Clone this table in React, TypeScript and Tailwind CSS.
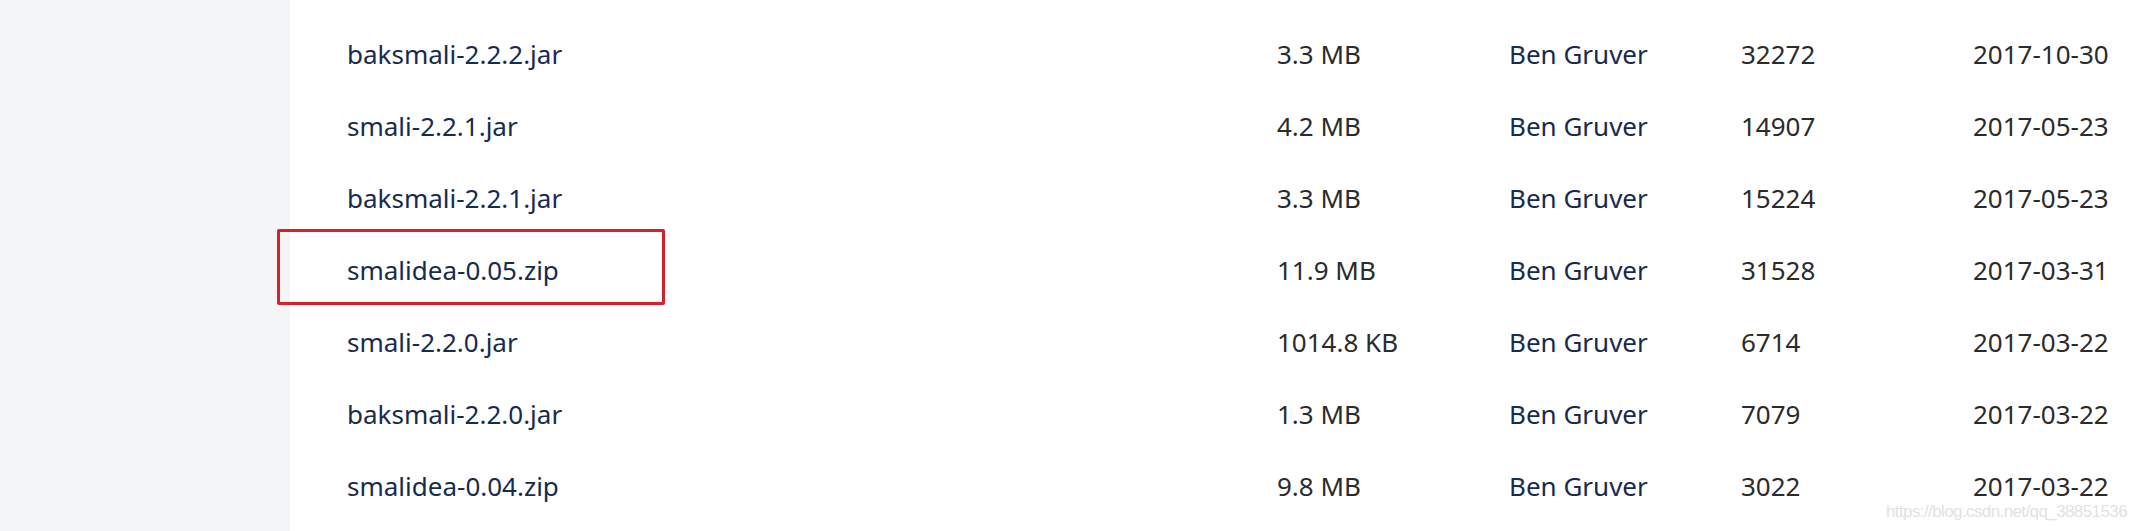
const rows = [
  { name: "baksmali-2.2.2.jar", size: "3.3 MB", by: "Ben Gruver", dl: "32272", date: "2017-10-30" },
  { name: "smali-2.2.1.jar", size: "4.2 MB", by: "Ben Gruver", dl: "14907", date: "2017-05-23" },
  { name: "baksmali-2.2.1.jar", size: "3.3 MB", by: "Ben Gruver", dl: "15224", date: "2017-05-23" },
  { name: "smalidea-0.05.zip", size: "11.9 MB", by: "Ben Gruver", dl: "31528", date: "2017-03-31" },
  { name: "smali-2.2.0.jar", size: "1014.8 KB", by: "Ben Gruver", dl: "6714", date: "2017-03-22" },
  { name: "baksmali-2.2.0.jar", size: "1.3 MB", by: "Ben Gruver", dl: "7079", date: "2017-03-22" },
  { name: "smalidea-0.04.zip", size: "9.8 MB", by: "Ben Gruver", dl: "3022", date: "2017-03-22" },
];

export default function App() {
  return (
    <div className="relative flex h-[531px] w-[2137px] overflow-hidden bg-white font-['Noto_Sans',sans-serif]">
      <div className="w-[290px] shrink-0 bg-[#f4f5f7]" />

      <div className="flex-1 pt-[18px] pl-[57px]">
        {rows.map((r) => (
          <div
            key={r.name}
            className="grid h-[72px] grid-cols-[930px_232px_232px_232px_1fr] items-center text-[26px] leading-none"
          >
            <span className="text-[#172b4d]">{r.name}</span>
            <span className="text-[#2b2b2b]">{r.size}</span>
            <span className="text-[#172b4d]">{r.by}</span>
            <span className="text-[#2b2b2b]">{r.dl}</span>
            <span className="text-[#2b2b2b]">{r.date}</span>
          </div>
        ))}
      </div>

      {/* annotation box around the highlighted row */}
      <div className="absolute left-[277px] top-[229px] h-[76px] w-[388px] rounded-[2px] border-[3px] border-[#d8202c]" />

      {/* csdn watermark */}
      <div className="absolute right-[10px] bottom-[11px] font-['Liberation_Sans',sans-serif] text-[17px] leading-none tracking-[-0.6px] text-[#e2e2e2]">
        https://blog.csdn.net/qq_38851536
      </div>
    </div>
  );
}
